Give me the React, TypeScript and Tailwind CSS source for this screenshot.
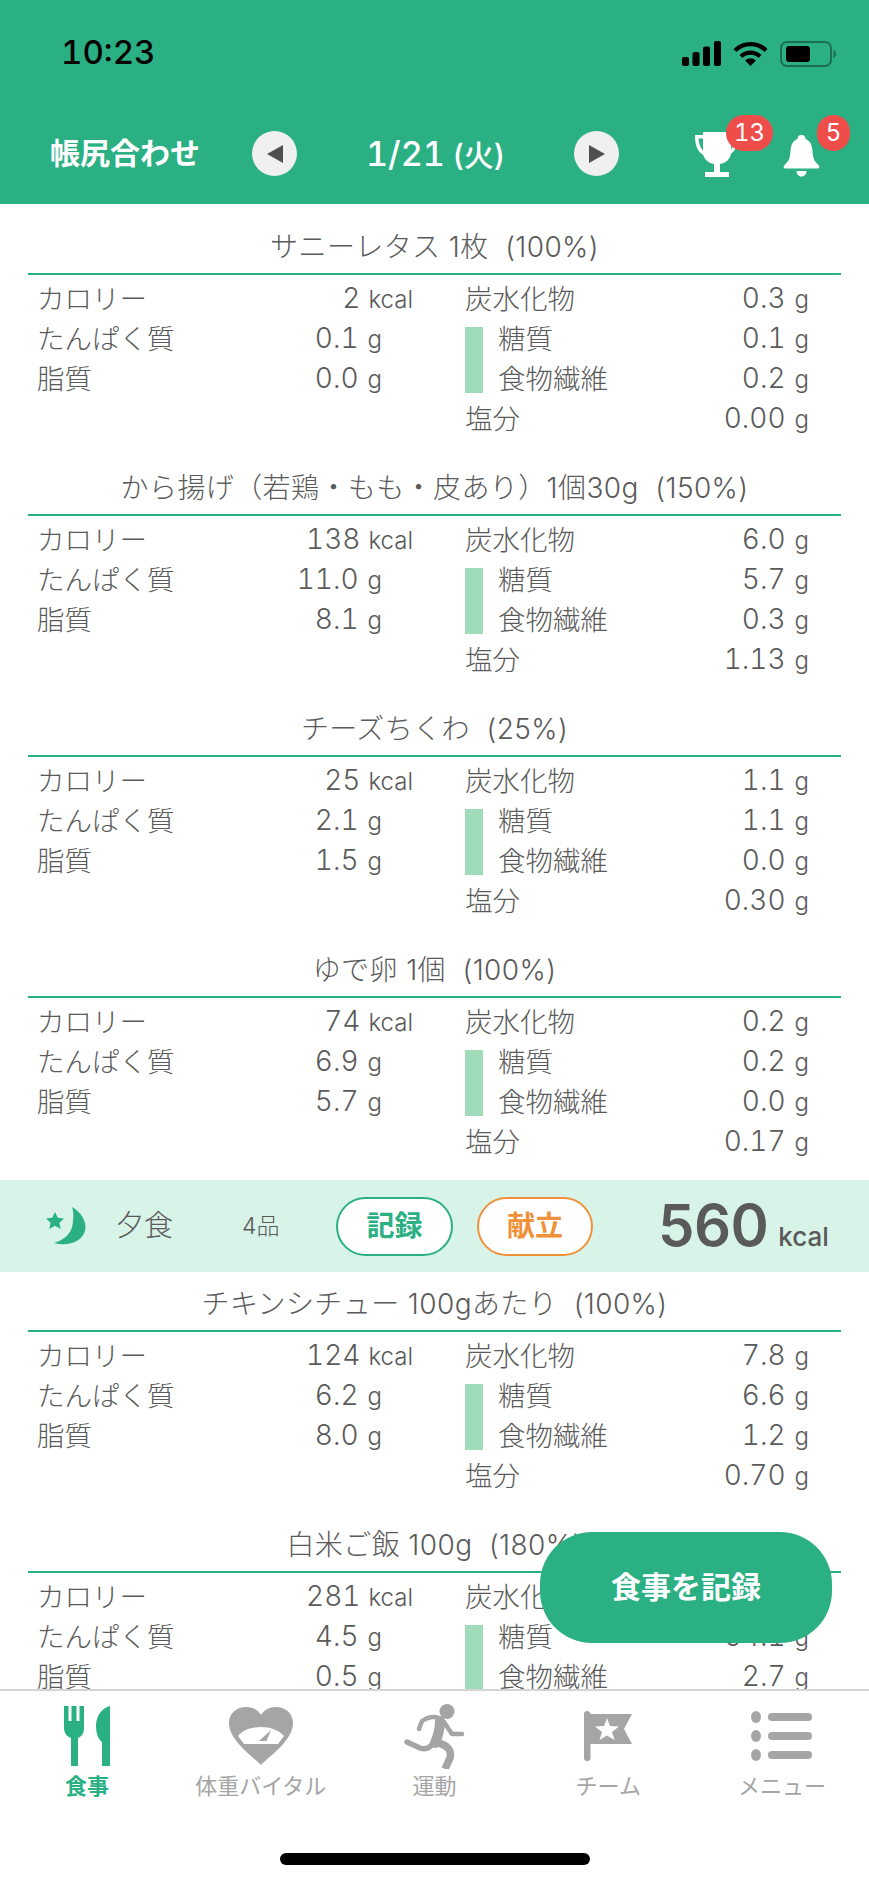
const cx = (...parts: string[]) => parts.join(' ')

type Food = {
  name: string
  kcal: string
  protein: string
  fat: string
  carb: string
  sugar: string
  fiber: string
  salt: string
}

const lunch: Food[] = [
  { name: 'サニーレタス 1枚  (100%)', kcal: '2', protein: '0.1', fat: '0.0', carb: '0.3', sugar: '0.1', fiber: '0.2', salt: '0.00' },
  { name: 'から揚げ（若鶏・もも・皮あり）1個30g  (150%)', kcal: '138', protein: '11.0', fat: '8.1', carb: '6.0', sugar: '5.7', fiber: '0.3', salt: '1.13' },
  { name: 'チーズちくわ  (25%)', kcal: '25', protein: '2.1', fat: '1.5', carb: '1.1', sugar: '1.1', fiber: '0.0', salt: '0.30' },
  { name: 'ゆで卵 1個  (100%)', kcal: '74', protein: '6.9', fat: '5.7', carb: '0.2', sugar: '0.2', fiber: '0.0', salt: '0.17' },
]

const dinner: Food[] = [
  { name: 'チキンシチュー 100gあたり  (100%)', kcal: '124', protein: '6.2', fat: '8.0', carb: '7.8', sugar: '6.6', fiber: '1.2', salt: '0.70' },
  { name: '白米ご飯 100g  (180%)', kcal: '281', protein: '4.5', fat: '0.5', carb: '66.8', sugar: '64.1', fiber: '2.7', salt: '0.00' },
]

function Value({ n, unit = 'g' }: { n: string; unit?: string }) {
  return (
    <span className={cx('flex items-baseline', unit === 'g' ? 'gap-[9px]' : 'gap-[8px]')}>
      <span className="text-[28px] tabular-nums">{n}</span>
      <span className="text-[24px]">{unit}</span>
    </span>
  )
}

function Row({ label, children, indent }: { label: string; children: React.ReactNode; indent?: boolean }) {
  return (
    <div className={cx('flex h-10 items-center justify-between', indent ? 'pl-[33px]' : '')}>
      <span className="pt-[4px]">{label}</span>
      {children}
    </div>
  )
}

function FoodBlock({ food }: { food: Food }) {
  return (
    <section>
      <h3 className="flex h-[42px] items-center justify-center whitespace-pre text-[28px] font-light tracking-[0.4px]">{food.name}</h3>
      <div className="mx-[28px] mt-[5px] h-[2px] bg-[#2bb084]" />
      <div className="mt-[3px] flex text-[27.5px] leading-none text-[#5a5a5a]">
        <div className="ml-[37px] w-[376px]">
          <Row label="カロリー">
            <Value n={food.kcal} unit="kcal" />
          </Row>
          <div className="pr-[31px]">
            <Row label="たんぱく質">
              <Value n={food.protein} />
            </Row>
            <Row label="脂質">
              <Value n={food.fat} />
            </Row>
          </div>
        </div>
        <div className="ml-[52px] w-[344px]">
          <Row label="炭水化物">
            <Value n={food.carb} />
          </Row>
          <div className="relative">
            <div className="absolute left-0 top-[9px] h-[66px] w-[18px] bg-[#a0dcb9]" />
            <Row label="糖質" indent>
              <Value n={food.sugar} />
            </Row>
            <Row label="食物繊維" indent>
              <Value n={food.fiber} />
            </Row>
          </div>
          <Row label="塩分">
            <Value n={food.salt} />
          </Row>
        </div>
      </div>
    </section>
  )
}

function StatusBar() {
  return (
    <div className="flex h-[107px] items-center justify-between pl-[61px] pr-[33px]">
      <span className="-mt-[1px] text-[33px] font-medium tabular-nums text-black">10:23</span>
      <div className="flex items-center gap-[12px]">
        <svg width="39" height="25" viewBox="0 0 39 25" fill="#000">
          <rect x="0" y="16" width="7" height="9" rx="2" />
          <rect x="10.5" y="11" width="7" height="14" rx="2" />
          <rect x="21" y="5.5" width="7" height="19.5" rx="2" />
          <rect x="32" y="0" width="7" height="25" rx="2" />
        </svg>
        <svg width="35" height="26" viewBox="0 0 35 26" fill="none" stroke="#000" strokeWidth="4.2">
          <path d="M2 9.5a22 22 0 0 1 31 0" />
          <path d="M8 15.500a13.500 13.500 0 0 1 19 0" />
          <path d="M17.500 25l-5.500-5.400a7.800 7.800 0 0 1 11 0z" fill="#000" stroke="none" />
        </svg>
        <svg width="56" height="26" viewBox="0 0 56 26" fill="none">
          <rect x="1" y="1" width="50" height="24" rx="6" stroke="#1a6f55" strokeWidth="2" />
          <rect x="6" y="5" width="24" height="16" rx="3" fill="#000" />
          <path d="M53.500 9v8c1.500-.5 2.500-2 2.500-4s-1-3.500-2.500-4z" fill="#1a6f55" />
        </svg>
      </div>
    </div>
  )
}

function Arrow({ dir }: { dir: 'left' | 'right' }) {
  return (
    <button className="flex h-[45px] w-[45px] items-center justify-center rounded-full bg-[#f0f0f0]">
      <svg width="16" height="18" viewBox="0 0 16 18" fill="#4f4f4f">
        <path d={dir === 'left' ? 'M0 9 16 0v18z' : 'M16 9 0 0v18z'} />
      </svg>
    </button>
  )
}

function Badge({ children, className }: { children: React.ReactNode; className: string }) {
  return (
    <span className={cx('absolute flex h-[36px] items-center justify-center rounded-full bg-[#ef4d4a] text-[24px] font-normal tabular-nums text-white', className)}>
      {children}
    </span>
  )
}

function NavBar() {
  return (
    <div className="flex h-[97px] items-start pt-[24px] text-white">
      <span className="ml-[50px] w-[202px] text-[30px] font-bold leading-[45px]">帳尻合わせ</span>
      <Arrow dir="left" />
      <span className="w-[277px] whitespace-pre text-center text-[30px] font-medium leading-[45px]">
        <span className="text-[34px] tabular-nums">1/21</span> (火)
      </span>
      <Arrow dir="right" />
      <div className="relative ml-[75px] h-[48px] w-[44px]">
        <svg width="44" height="48" viewBox="0 0 44 48" fill="#fff">
          <path d="M9 1h28v20c0 7-5 11-11 12v8h9v5H11v-5h9v-8c-6-1-11-5-11-12z" />
          <path d="M10 4H1c0 10 2 17 10 21l1.500-3C7 19 5 14 4.500 7.500H10z" />
          <path d="M37 4h7c0 8-1 16-9 20l-1-3c5-3 6-8 6.500-13.500H37z" />
        </svg>
        <Badge className="left-[32px] top-[-16px] w-[47px]">13</Badge>
      </div>
      <div className="relative ml-[45px] h-[42px] w-[37px] self-start">
        <svg className="mt-[4px]" width="37" height="42" viewBox="0 0 37 42" fill="#fff">
          <path d="M18.500 0c3 0 4 2 4 4 5 2 6.500 6 7 12 .5 7 1.500 10 6 14 1.500 2 1 3.500-1 3.500H2.500c-2 0-2.500-1.500-1-3.500 4.500-4 5.500-7 6-14 .5-6 2-10 7-12 0-2 1-4 4-4z" />
          <path d="M13.500 36h10c0 3-2 5.500-5 5.500s-5-2.500-5-5.500z" />
        </svg>
        <Badge className="left-[34px] top-[-16px] w-[33px]">5</Badge>
      </div>
    </div>
  )
}

function Moon() {
  return (
    <svg width="42" height="38" viewBox="0 0 42 38" fill="#2bb084">
      <path d="M27 0C37 6 42 15 40 24 37 34 24 40 9 36 19 33 26 27 27.500 18 28.500 11 29 5 27 0z" />
      <path d="M10 5l2.800 5.800 6.200.7-4.600 4.200 1.300 6.300-5.700-3.200L4.300 22l1.300-6.300L1 11.500l6.200-.7z" />
    </svg>
  )
}

function MealBar() {
  return (
    <div className="flex h-[92px] items-center bg-[#d8f3e8] text-[#5a5a5a]">
      <div className="ml-[45px]">
        <Moon />
      </div>
      <span className="ml-[28px] w-[127px] text-[29px]">夕食</span>
      <span className="w-[94px] text-[23px]">4品</span>
      <span className="flex h-[59px] w-[117px] items-center justify-center rounded-[30px] border-2 border-[#2bb084] bg-white text-[28px] font-bold text-[#2bb084]">記録</span>
      <span className="ml-[24px] flex h-[59px] w-[116px] items-center justify-center rounded-[30px] border-2 border-[#f0913a] bg-white text-[28px] font-bold text-[#f0913a]">献立</span>
      <span className="ml-[65px] flex items-baseline font-semibold">
        <span className="text-[58px] leading-none tracking-[-0.5px]">560</span>
        <span className="ml-[10px] text-[26px] font-medium">kcal</span>
      </span>
    </div>
  )
}

function TabIcon({ index }: { index: number }) {
  if (index === 0) {
    return (
      <svg width="46" height="60" viewBox="0 0 46 60" fill="#2bb084">
        <path d="M0 0h4.500v15h3V0h5v15h3V0H20v22c0 6-3 9-6 10v28H7V32c-3-1-7-4-7-10z" />
        <path d="M46 0v60h-8V36c-4-3-6-9-6-16C32 10 38 2 46 0z" />
      </svg>
    )
  }
  if (index === 1) {
    return (
      <svg width="64" height="58" viewBox="0 0 64 58" fill="#a5a5a5">
        <path
          fillRule="evenodd"
          d="M32 58C22 48 0 33 0 16 0 6 8 0 17 0c7 0 12 3 15 8 3-5 8-8 15-8 9 0 17 6 17 16 0 17-22 32-32 42zM9 29l6 8h34l6-8c-5-6-14-9-23-9S14 23 9 29z"
        />
        <path d="M42 23l-4.500 11H30z" />
      </svg>
    )
  }
  if (index === 2) {
    return (
      <svg width="61" height="65" viewBox="0 0 61 65" fill="none" stroke="#a5a5a5" strokeLinecap="round" strokeLinejoin="round">
        <circle cx="43" cy="7.500" r="7.500" fill="#a5a5a5" stroke="none" />
        <path d="M15 25l3-8c6-4 12-5 17-3" strokeWidth="4.500" />
        <path d="M36 17C36 25 34 32 31 39" strokeWidth="10" />
        <path d="M40 18l8 12h10" strokeWidth="4.500" />
        <path d="M30 38c-4 6-9 8-14 6L3 38" strokeWidth="5.500" />
        <path d="M34 39c9 2 14 7 12 15l-5 11" strokeWidth="7.500" strokeLinecap="butt" />
      </svg>
    )
  }
  if (index === 3) {
    return (
      <svg width="48" height="50" viewBox="0 0 48 50" fill="#a5a5a5">
        <path
          fillRule="evenodd"
          d="M3 0c2 0 3 1 3.500 3H48l-8 15 8 15H6.500v14c0 2-1 3-3.300 3S0 49 0 47V3C0 1 1 0 3 0zM23 7l-3 8-9 .5 7 5.500-2.500 8 7.500-4.500 7.500 4.500L28 21l7-5.500-9-.5z"
        />
      </svg>
    )
  }
  return (
    <svg width="62" height="50" viewBox="0 0 62 50" fill="#a5a5a5">
      <ellipse cx="5" cy="6" rx="5" ry="6" />
      <ellipse cx="5" cy="25" rx="5" ry="6" />
      <ellipse cx="5" cy="44" rx="5" ry="6" />
      <rect x="17" y="2" width="44" height="8" rx="4" />
      <rect x="17" y="21" width="44" height="8" rx="4" />
      <rect x="17" y="40" width="44" height="8" rx="4" />
    </svg>
  )
}

const tabs = ['食事', '体重バイタル', '運動', 'チーム', 'メニュー']

function TabBar() {
  return (
    <nav className="h-[193px] shrink-0 border-t-2 border-[#d4d4d4] bg-white">
      <div className="grid grid-cols-5">
        {tabs.map((t, i) => (
          <div key={t} className="flex flex-col items-center pt-[12px]">
            <div className="flex h-[66px] items-center justify-center">
              <TabIcon index={i} />
            </div>
            <span className={cx('mt-[1px] text-[22px]', i === 0 ? 'font-bold text-[#2bb084]' : 'font-normal text-[#a5a5a5]')}>{t}</span>
          </div>
        ))}
      </div>
      <div className="mx-auto mt-[50px] h-[12px] w-[310px] rounded-full bg-black" />
    </nav>
  )
}

export default function App() {
  return (
    <div className="relative flex h-[1882px] w-[869px] flex-col overflow-hidden bg-white font-['Inter','Noto_Sans_CJK_JP',sans-serif] font-light text-[#5a5a5a]">
      <header className="h-[204px] shrink-0 bg-[#2bb084]">
        <StatusBar />
        <NavBar />
      </header>
      <main className="min-h-0 flex-1 overflow-hidden">
        <div className="flex flex-col gap-[29px] pb-[19px] pt-[22px]">
          {lunch.map(f => (
            <FoodBlock key={f.name} food={f} />
          ))}
        </div>
        <MealBar />
        <div className="flex flex-col gap-[29px] pt-[11px]">
          {dinner.map(f => (
            <FoodBlock key={f.name} food={f} />
          ))}
        </div>
      </main>
      <TabBar />
      <button className="absolute left-[540px] top-[1532px] flex h-[111px] w-[292px] items-center justify-center rounded-[52px] bg-[#2bb084] text-[30px] font-bold text-white">
        食事を記録
      </button>
    </div>
  )
}
